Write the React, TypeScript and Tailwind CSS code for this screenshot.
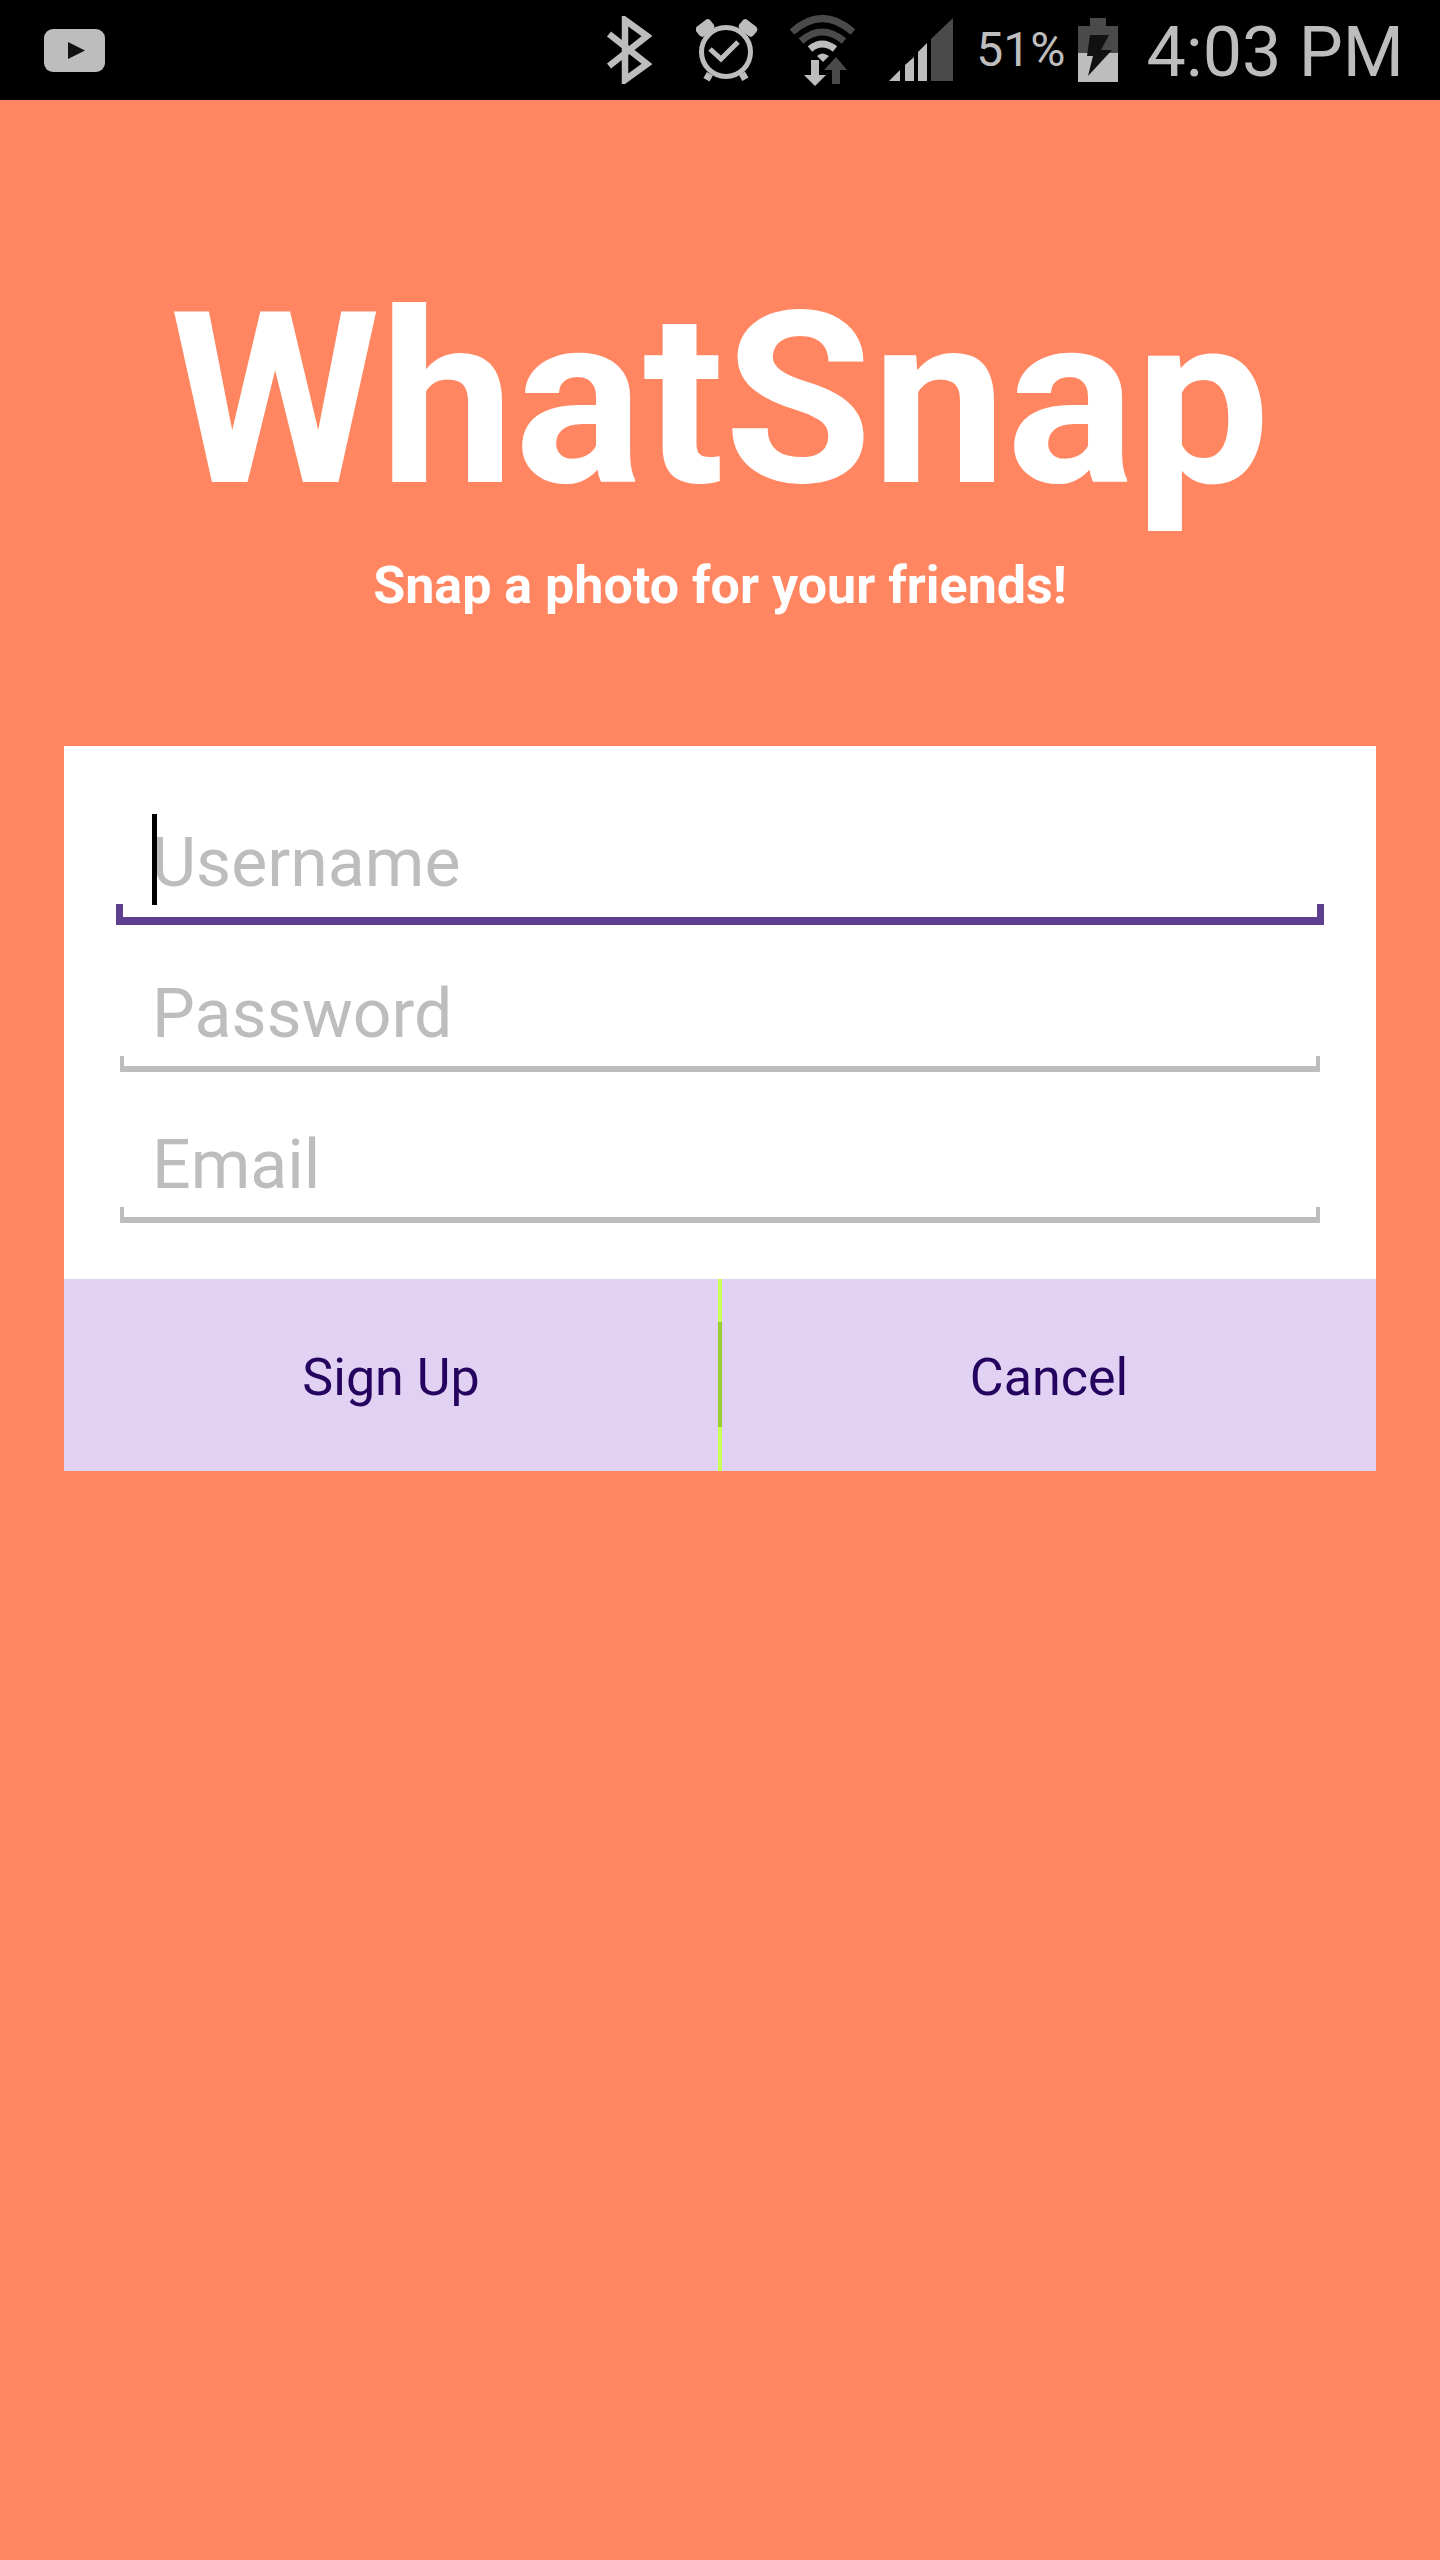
const roboto = "font-['Roboto',sans-serif]";

function StatusIcons() {
  return (
    <div className="ml-auto flex h-full items-center">
      {/* bluetooth */}
      <svg width="46" height="68" viewBox="0 0 46 68">
        <polyline points="3,18 41,48 19,64 19,4 41,20 3,50" fill="none" stroke="#bdbdbd" strokeWidth="6.5" />
      </svg>
      {/* alarm */}
      <svg width="62" height="64" viewBox="0 0 62 64" className="ml-[44px]">
        <circle cx="30" cy="34" r="24.5" fill="none" stroke="#bdbdbd" strokeWidth="5" />
        <polyline points="14,31 25,41 42,24" fill="none" stroke="#bdbdbd" strokeWidth="5" />
        <rect x="0" y="4" width="18" height="12" rx="4" fill="#bdbdbd" transform="rotate(-38 9 10)" />
        <rect x="43" y="4" width="18" height="12" rx="4" fill="#bdbdbd" transform="rotate(38 52 10)" />
        <rect x="9" y="55" width="7" height="7" fill="#bdbdbd" transform="rotate(30 12 58)" />
        <rect x="44" y="55" width="7" height="7" fill="#bdbdbd" transform="rotate(-30 47 58)" />
      </svg>
      {/* wifi with data arrows */}
      <svg width="68" height="72" viewBox="0 0 68 72" className="ml-[31px]">
        <path d="M3 18 Q33 -9 64 18" fill="none" stroke="#4a4a4a" strokeWidth="7" />
        <path d="M12 27 Q33 9 55 27" fill="none" stroke="#4a4a4a" strokeWidth="7" />
        <path d="M21 35 Q33 25 46 35" fill="none" stroke="#bdbdbd" strokeWidth="7" />
        <path d="M28 42 Q33 37 40 42 L34 48 Z" fill="#bdbdbd" />
        <polygon points="43,56 43,70 51,70 51,56 58,56 47,43 35,56" fill="#4a4a4a" />
        <polygon points="22,46 30,46 30,61 37,61 26,72 15,61 22,61" fill="#bdbdbd" />
      </svg>
      {/* signal */}
      <svg width="64" height="64" viewBox="0 0 64 64" className="ml-[32px]">
        <polygon points="0,63 11,52 11,63" fill="#bdbdbd" />
        <polygon points="16,47 25,39 25,63 16,63" fill="#bdbdbd" />
        <polygon points="29,34 38,25 38,63 29,63" fill="#bdbdbd" />
        <polygon points="42,21 64,0 64,63 42,63" fill="#4a4a4a" />
      </svg>
      <span className={`${roboto} ml-[23px] text-[48px] leading-none text-[#bdbdbd]`}>51%</span>
      {/* battery */}
      <svg width="40" height="64" viewBox="0 0 40 64" className="ml-[13px]">
        <rect x="12" y="0" width="16" height="9" fill="#4a4a4a" />
        <rect x="0" y="8" width="40" height="28" fill="#4a4a4a" />
        <rect x="0" y="35" width="40" height="29" fill="#bdbdbd" />
        <polygon points="12,17 31,17 23,32 34,32 10,58 15,38 9,38" fill="#111111" />
      </svg>
      <span className={`${roboto} ml-[28px] mr-[36px] mt-[3px] text-[70px] leading-none text-[#bdbdbd]`}>4:03 PM</span>
    </div>
  );
}

function Field({ label, focused }: { label: string; focused?: boolean }) {
  if (focused) {
    return (
      <div className="relative mb-[-4px]">
        <div className="absolute left-[36px] top-[-10px] h-[91px] w-[5px] bg-black" />
        <div className={`${roboto} pl-[36px] text-[68px] leading-[78px] text-[#bdbdbd]`}>{label}</div>
        <div className="mt-[2px] h-[21px] border-x-[7px] border-b-[8px] border-[#5e3f8f]" />
      </div>
    );
  }
  return (
    <div className="relative">
      <div className={`${roboto} pl-[36px] text-[68px] leading-[76px] text-[#bdbdbd]`}>{label}</div>
      <div className="mx-[4px] mt-[4px] h-[16px] border-x-[4px] border-b-[6px] border-[#bdbdbd]" />
    </div>
  );
}

export default function App() {
  return (
    <div className={`${roboto} flex min-h-[2560px] flex-col bg-[#ff8661]`}>
      <div className="flex h-[100px] items-center bg-black">
        <svg width="61" height="43" viewBox="0 0 61 43" className="ml-[44px]">
          <rect x="0" y="0" width="61" height="43" rx="9" fill="#bdbdbd" />
          <polygon points="24,13 41,21.5 24,30" fill="#111111" />
        </svg>
        <StatusIcons />
      </div>

      <div className="pt-[180px] text-center">
        <h1 className="text-[240px] leading-[240px] font-bold text-white">WhatSnap</h1>
        <p className="mt-[36px] text-[52px] leading-[60px] font-bold text-white">Snap a photo for your friends!</p>
      </div>

      <div className="mx-[64px] mt-[130px] bg-white">
        <div className="flex flex-col gap-[55px] px-[52px] pt-[78px] pb-[56px]">
          <Field label="Username" focused />
          <Field label="Password" />
          <Field label="Email" />
        </div>
        <div className="flex h-[192px] bg-[#e1d1f3] text-[52px] text-[#24045e]">
          <div className="flex flex-1 items-center justify-center pt-[6px]">Sign Up</div>
          <div className="flex w-[4px] flex-col bg-[#c8ff5a]">
            <div className="mt-[43px] h-[105px] bg-[#9acd32]" />
          </div>
          <div className="flex flex-1 items-center justify-center pt-[6px]">Cancel</div>
        </div>
      </div>
    </div>
  );
}
